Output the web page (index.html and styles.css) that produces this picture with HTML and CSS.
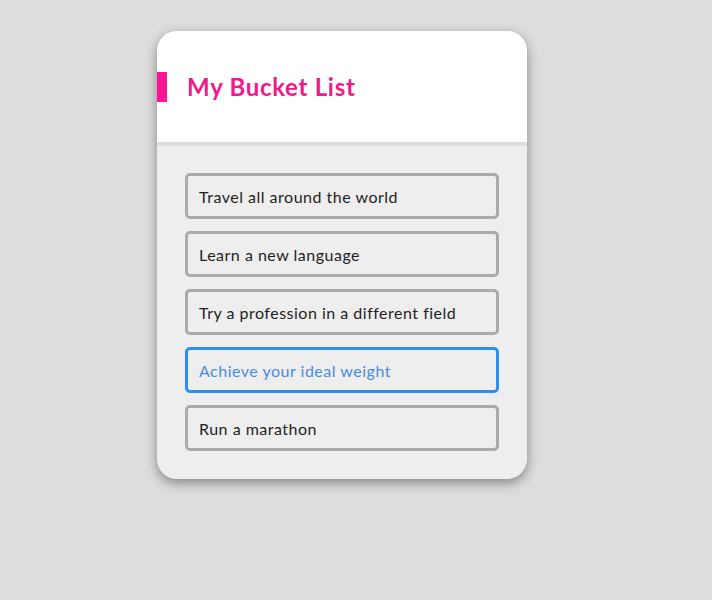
FILE: index.html
```html
<!DOCTYPE html>
<html>
<head>
<meta charset="utf-8">
<link rel="stylesheet" href="styles.css">
</head>
<body>
<div class="card">
  <header class="card-header">
    <h1 class="title">My Bucket List</h1>
  </header>
  <ul class="list">
    <li class="item">Travel all around the world</li>
    <li class="item">Learn a new language</li>
    <li class="item">Try a profession in a different field</li>
    <li class="item item-active">Achieve your ideal weight</li>
    <li class="item">Run a marathon</li>
  </ul>
</div>
</body>
</html>
```
FILE: styles.css
```css
html, body {
  margin: 0;
  padding: 0;
  background: #dddddd;
  font-family: "Lato", "Noto Sans", sans-serif;
}
body {
  padding: 31px 0 40px 157px;
}
.card {
  width: 370px;
  border-radius: 20px;
  background: #eeeeee;
  box-shadow: 0 4px 12px rgba(0, 0, 0, 0.4);
}
.card-header {
  background: #ffffff;
  height: 111px;
  border-bottom: 4px solid #dddddd;
  border-radius: 20px 20px 0 0;
  display: flex;
  align-items: center;
}
.title {
  margin: 0;
  font-size: 24px;
  font-weight: 700;
  color: #ee1a8c;
  border-left: 10px solid #ff1493;
  padding-left: 20px;
  line-height: 30px;
  height: 30px;
  letter-spacing: 0.7px;
}
.list {
  list-style: none;
  margin: 0;
  padding: 27px 28px 28px;
  display: flex;
  flex-direction: column;
  gap: 12px;
}
.item {
  height: 40px;
  box-sizing: content-box;
  border: 3px solid #aaaaaa;
  border-radius: 5px;
  padding: 0 11px;
  display: flex;
  align-items: center;
  font-size: 16px;
  color: #1e1e1e;
  letter-spacing: 0.5px;
}
.item-active {
  border-color: #2a8ff0;
  color: #4a8be0;
}
```
